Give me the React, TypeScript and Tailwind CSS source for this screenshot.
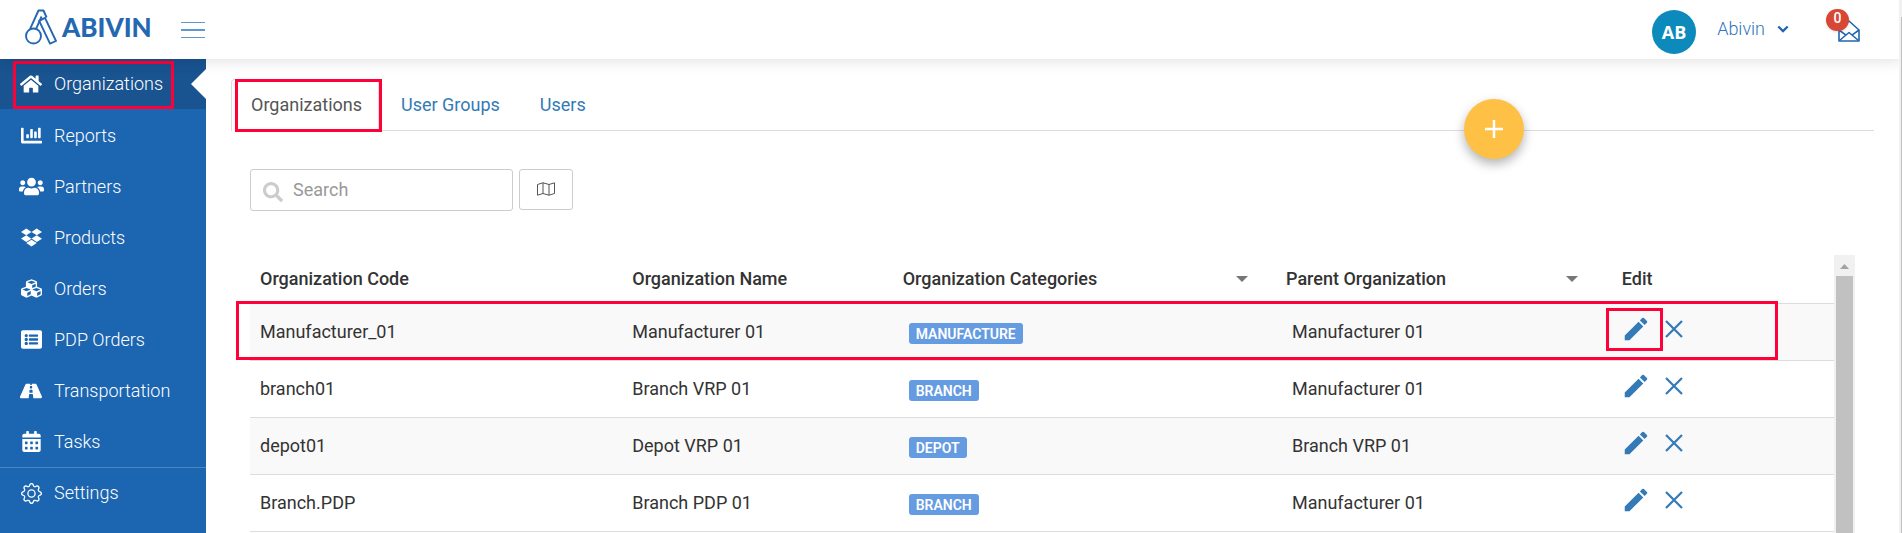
import React from 'react';
import { FaHome, FaChartBar, FaUsers, FaDropbox, FaCubes, FaListAlt, FaRoad, FaCalendarAlt, FaSearch } from 'react-icons/fa';
import { BsGear } from 'react-icons/bs';
import { MdEdit } from 'react-icons/md';

const nav = [
  { label: 'Organizations', Icon: FaHome, size: 'size-[22px]' },
  { label: 'Reports', Icon: FaChartBar, size: 'size-[21px]' },
  { label: 'Partners', Icon: FaUsers, size: 'size-[25px]' },
  { label: 'Products', Icon: FaDropbox, size: 'size-[21px]' },
  { label: 'Orders', Icon: FaCubes, size: 'size-[21px]' },
  { label: 'PDP Orders', Icon: FaListAlt, size: 'size-[21px]' },
  { label: 'Transportation', Icon: FaRoad, size: 'size-[22px]' },
  { label: 'Tasks', Icon: FaCalendarAlt, size: 'size-[21px]' },
  { label: 'Settings', Icon: BsGear, size: 'size-[21px]' },
];

const rows = [
  { code: 'Manufacturer_01', name: 'Manufacturer 01', category: 'MANUFACTURE', parent: 'Manufacturer 01' },
  { code: 'branch01', name: 'Branch VRP 01', category: 'BRANCH', parent: 'Manufacturer 01' },
  { code: 'depot01', name: 'Depot VRP 01', category: 'DEPOT', parent: 'Branch VRP 01' },
  { code: 'Branch.PDP', name: 'Branch PDP 01', category: 'BRANCH', parent: 'Manufacturer 01' },
];

function Highlight({ className }: { className: string }) {
  return <span aria-hidden="true" className={`pointer-events-none absolute z-10 border-3 border-[#ff0038] ${className}`} />;
}

function Logo() {
  return (
    <a href="#home" className="flex items-center gap-[5px] text-[#2468b2]">
      <svg viewBox="0 0 32 36" className="h-9 w-8" fill="none" stroke="currentColor" strokeWidth="1.9" strokeLinejoin="round">
        <circle cx="8.500" cy="27" r="7.500" />
        <path d="M5 20.200 13.500 1.500h5L21.600 8.500M11 20.200 16.600 7.500" />
        <path d="M14.200 11.800 20 8.800 31 32l-6 2.600z" />
      </svg>
      <span className="font-[Lato,sans-serif] text-[26px] leading-9 font-black">ABIVIN</span>
    </a>
  );
}

function Header() {
  return (
    <header className="relative z-20 flex h-[59px] items-center justify-between bg-white pr-[42px] pl-[25px] shadow-[0_2px_14px_rgba(0,0,0,0.12)]">
      <div className="flex items-center gap-[29px] pb-1.5">
        <Logo />
        <button type="button" aria-label="Toggle menu" className="mt-1.5 flex w-6 flex-col gap-1.5">
          <span className="h-px bg-[#5f97cf]" />
          <span className="h-0.5 bg-[#5f97cf]" />
          <span className="h-px bg-[#5f97cf]" />
        </button>
      </div>
      <div className="flex items-center">
        <span className="mt-1 flex size-11 items-center justify-center rounded-full bg-[#0d8abc] font-['Open_Sans',sans-serif] text-lg font-bold text-white">AB</span>
        <button type="button" className="mr-[37px] mb-0.5 ml-[21px] flex items-center gap-3 text-lg leading-6 font-light text-[#2f75bd]">
          Abivin
          <svg viewBox="0 0 12 8" className="h-2 w-3" fill="none" stroke="#2166b0" strokeWidth="2.4"><path d="M1.3 1.5 6 6l4.700-4.500" /></svg>
        </button>
        <button type="button" aria-label="Notifications" className="relative mb-2 flex h-[33px] w-[34px] items-end justify-end">
          <svg viewBox="0 0 22 22" className="h-[22px] w-[22px]" fill="none" stroke="#2166b0" strokeWidth="1.600" strokeLinejoin="round">
            <path d="M1 10 11 1l10 9v11H1z" />
            <path d="M1 10l7 5.200M21 10l-7 5.200M1.500 20.500 11 12.500l9.500 8" />
          </svg>
          <span className="absolute top-0 left-0 flex h-[22px] w-[23px] items-center justify-center rounded-full bg-[#d84735] pb-1 text-sm font-medium text-white shadow">0</span>
        </button>
      </div>
    </header>
  );
}

function Sidebar() {
  return (
    <nav className="w-[206px] shrink-0 bg-[#1c65b1]">
      <ul>
        {nav.map(({ label, Icon, size }, i) => (
          <li key={label} className={`relative h-[51px] ${i === 0 ? 'border-b border-[#1c65b1] bg-[#195390]' : ''} ${i === 8 ? 'border-t border-[#4788bd]' : ''}`}>
            <a href={`#${label}`} className="flex h-full items-center pl-[17px] text-lg font-light text-white">
              <span className="mr-[9px] flex w-[28px] justify-center"><Icon className={`${size} shrink-0`} /></span>
              {label}
            </a>
            {i === 0 && (
              <>
                <svg viewBox="0 0 15 30" className="absolute top-2.5 right-0 h-[30px] w-[15px]"><path d="M15 0 0 15l15 15z" fill="#fff" /></svg>
                <Highlight className="top-0.5 left-[13px] h-12 w-[161px]" />
              </>
            )}
          </li>
        ))}
      </ul>
    </nav>
  );
}

function SortArrow() {
  return <svg viewBox="0 0 12 6" className="h-1.5 w-3"><path d="M0 0h12L6 6z" fill="#777" /></svg>;
}

function OrganizationTable() {
  return (
    <div className="relative min-w-0 grow">
      <table className="w-full table-fixed border-collapse text-left text-lg leading-6 text-[#333]">
        <colgroup>
          <col className="w-[23.5%]" />
          <col className="w-[17.2%]" />
          <col className="w-[24.2%]" />
          <col className="w-[21.2%]" />
          <col />
        </colgroup>
        <thead>
          <tr className="h-12 border-b border-[#ddd]">
            <th className="pl-2.5 font-medium">Organization Code</th>
            <th className="pl-2.5 font-medium">Organization Name</th>
            <th className="pl-2 font-medium">
              <span className="flex items-center justify-between pr-[30px]">Organization Categories<SortArrow /></span>
            </th>
            <th className="pl-2 font-medium">
              <span className="flex items-center justify-between pr-9">Parent Organization<SortArrow /></span>
            </th>
            <th className="pl-2 font-medium">Edit</th>
          </tr>
        </thead>
        <tbody>
          {rows.map((row, i) => (
            <tr key={row.code} className="h-[57px] border-b border-[#ddd] odd:bg-[#f9f9f9]">
              <td className="pl-2.5">{row.code}</td>
              <td className="pl-2.5">{row.name}</td>
              <td className="pl-3.5">
                <span className="mt-1 flex h-[21px] w-fit items-center rounded-[3px] bg-[#659be0] px-[7px] text-sm leading-5 font-semibold text-white">{row.category}</span>
              </td>
              <td className="pl-3.5">{row.parent}</td>
              <td className="pl-[7px]">
                <div className="relative -mt-1.5 flex items-center gap-3.5 text-[#337ab7]">
                  <button type="button" aria-label={`Edit ${row.name}`}><MdEdit className="size-[30px]" /></button>
                  <button type="button" aria-label={`Delete ${row.name}`}>
                    <svg viewBox="0 0 18 18" className="size-[18px]" fill="none" stroke="currentColor" strokeWidth="2.200"><path d="M1 1l16 16M17 1 1 17" /></svg>
                  </button>
                  {i === 0 && <Highlight className="-top-1.5 -left-[15px] h-[43px] w-[57px]" />}
                </div>
              </td>
            </tr>
          ))}
        </tbody>
      </table>
      <Highlight className="top-[46px] right-14 -left-3.5 h-[59px]" />
    </div>
  );
}

export default function App() {
  return (
    <div className="flex h-screen flex-col overflow-hidden bg-white font-[Roboto,sans-serif] text-[#333]">
      <Header />
      <div className="flex min-h-0 grow">
        <Sidebar />
        <main className="min-w-0 grow pt-5 pr-[25px] pl-[25px]">
          <div className="relative flex h-[52px] border-b border-[#ddd] text-lg">
            <a href="#organizations" className="-mb-px w-[148px] rounded-t border border-b-0 border-[#ddd] bg-white pt-[11px] pl-[19px] text-[#555]">Organizations</a>
            <a href="#groups" className="pt-3 pl-[22px] text-[#337ab7]">User Groups</a>
            <a href="#users" className="pt-3 pl-10 text-[#337ab7]">Users</a>
            <Highlight className="top-0 left-1 h-[53px] w-[147px]" />
            <button type="button" aria-label="Add organization" className="absolute top-5 right-[350px] flex size-[60px] items-center justify-center rounded-full bg-[#ffc145] shadow-[0_5px_11px_rgba(0,0,0,0.3)]">
              <svg viewBox="0 0 18 18" className="size-[18px]" stroke="#fff" strokeWidth="2.500"><path d="M9 0v18M0 9h18" /></svg>
            </button>
          </div>
          <div className="mt-[38px] flex items-start gap-1.5 pl-[19px]">
            <label className="flex h-[42px] w-[263px] items-center gap-2.5 rounded-[3px] border border-[#ccc] pl-3">
              <FaSearch className="mt-1 size-5 shrink-0 text-[#ccc]" />
              <input type="text" placeholder="Search" aria-label="Search" className="min-w-0 grow text-lg outline-none placeholder:text-[#999]" />
            </label>
            <button type="button" aria-label="Show map" className="flex h-[41px] w-[54px] items-center justify-center rounded-[3px] border border-[#ccc] pb-0.5 text-[#555]">
              <svg viewBox="0 0 18 14" className="h-3.5 w-[18px]" fill="none" stroke="currentColor" strokeLinejoin="round">
                <path d="M.5 2.500 6 .8l6 1.700L17.500.8v10.700L12 13.200l-6-1.700L.5 13.200zM6 .8v10.700M12 2.500v10.700" />
              </svg>
            </button>
          </div>
          <div className="mt-11 flex pr-[19px] pl-[19px]">
            <OrganizationTable />
            <div className="flex h-[278px] w-[21px] shrink-0 flex-col items-center bg-[#f1f1f1]">
              <svg viewBox="0 0 21 21" className="size-[21px] shrink-0"><path d="M6 14h9l-4.500-5z" fill="#a3a3a3" /></svg>
              <div className="w-[17px] grow bg-[#c1c1c1]" />
            </div>
          </div>
        </main>
        <div className="relative z-20 -mt-[59px] w-[3px] shrink-0 bg-[#f1f1f1] pt-[17px]">
          <div className="h-full border-r border-[#c1c1c1]" />
        </div>
      </div>
    </div>
  );
}
